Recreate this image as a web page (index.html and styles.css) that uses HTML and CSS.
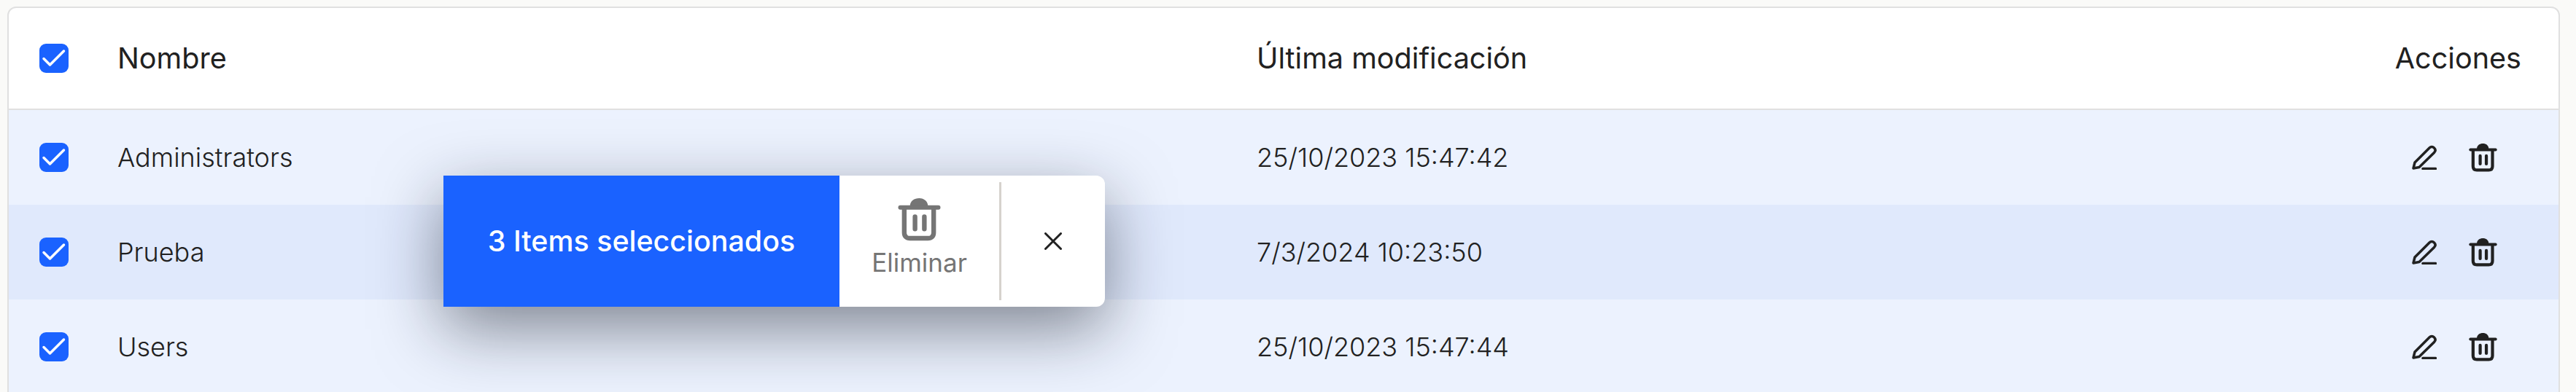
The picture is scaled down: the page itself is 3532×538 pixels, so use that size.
FILE: index.html
```html
<!DOCTYPE html>
<html lang="es">
<head>
    <meta charset="UTF-8">
    <title>Grupos</title>
    <link rel="stylesheet" href="styles.css">
</head>
<body>
    <svg class="icon-defs" width="0" height="0">
        <symbol id="trash" viewBox="0 0 60 60">
            <path d="M17 11C17 4 23 0 30 0C36 0 42 4 42 11Z" fill="currentColor"/>
            <path d="M3.500 13H56.500" fill="none" stroke="currentColor" stroke-width="6" stroke-linecap="round"/>
            <path d="M9 13V48C9 53 12 56 17 56H42C47 56 50 53 50 48V13" fill="none" stroke="currentColor" stroke-width="6.500"/>
            <path d="M24 26V43M37 26V43" fill="none" stroke="currentColor" stroke-width="6.500" stroke-linecap="round"/>
        </symbol>
        <symbol id="pencil" viewBox="0 0 34 34">
            <path d="M2 32L4 24L24 4C26 2 28.500 2 30.500 4C32.500 6 32.500 8.500 30.500 10.500L10 30.500Z" fill="none" stroke="currentColor" stroke-width="3.500" stroke-linejoin="round"/>
            <path d="M15 32.500H32.500" fill="none" stroke="currentColor" stroke-width="3.500" stroke-linecap="round"/>
        </symbol>
        <symbol id="check" viewBox="0 0 40 40">
            <path d="M6 20.500L14.500 29L33.500 10" fill="none" stroke="#fff" stroke-width="3.500" stroke-linecap="round" stroke-linejoin="round"/>
        </symbol>
    </svg>

    <div class="table-card">
        <div class="row head">
            <svg class="checkbox"><use href="#check"/></svg>
            <div>Nombre</div>
            <div>Última modificación</div>
            <div class="actions-title">Acciones</div>
        </div>
        <div class="row selected">
            <svg class="checkbox"><use href="#check"/></svg>
            <div>Administrators</div>
            <div>25/10/2023 15:47:42</div>
            <div class="actions">
                <svg class="icon-edit"><use href="#pencil"/></svg>
                <svg class="icon-delete"><use href="#trash"/></svg>
            </div>
        </div>
        <div class="row selected alt">
            <svg class="checkbox"><use href="#check"/></svg>
            <div>Prueba</div>
            <div>7/3/2024 10:23:50</div>
            <div class="actions">
                <svg class="icon-edit"><use href="#pencil"/></svg>
                <svg class="icon-delete"><use href="#trash"/></svg>
            </div>
        </div>
        <div class="row selected">
            <svg class="checkbox"><use href="#check"/></svg>
            <div>Users</div>
            <div>25/10/2023 15:47:44</div>
            <div class="actions">
                <svg class="icon-edit"><use href="#pencil"/></svg>
                <svg class="icon-delete"><use href="#trash"/></svg>
            </div>
        </div>
    </div>

    <!-- barra flotante de seleccion -->
    <div class="selection-bar">
        <div class="selection-count">3 Items seleccionados</div>
        <div class="selection-delete">
            <svg class="icon-big"><use href="#trash"/></svg>
            <span>Eliminar</span>
        </div>
        <div class="selection-sep"></div>
        <div class="selection-close">
            <svg class="icon-close" viewBox="0 0 24 24">
                <path d="M1.500 1.500L22.500 22.500M22.500 1.500L1.500 22.500" fill="none" stroke="#212121" stroke-width="3" stroke-linecap="round"/>
            </svg>
        </div>
    </div>
</body>
</html>
```

FILE: styles.css
```css
html, body {
    height: 100%;
    overflow: hidden;
}
body {
    margin: 0;
    padding: 9px 22px 0 10px;
    box-sizing: border-box;
    background: #fafaf8;
    font-family: Inter, "Liberation Sans", sans-serif;
    color: #212121;
}
.icon-defs { display: block; height: 0; }
.table-card {
    background: white;
    border: 2px solid #e0e0e0;
    border-radius: 12px 12px 0 0;
    overflow: hidden;
}
.row {
    display: grid;
    grid-template-columns: 107px 1562px 1fr 300px;
    align-items: center;
    height: 130px;
    padding-left: 42px;
    font-size: 36px;
    font-weight: 300;
}
.row.head {
    height: 138px;
    border-bottom: 2px solid #e0e0e0;
    font-size: 39.6px;
    font-weight: 400;
}
.selected { background: #ecf2fe; }
.selected.alt { background: #e0e9fc; }
.checkbox {
    width: 40px;
    height: 40px;
    background: #1a62ff;
    border-radius: 9px;
}
.actions-title {
    text-align: right;
    padding-right: 51px;
}
.actions {
    display: flex;
    justify-content: flex-end;
    align-items: center;
    gap: 44px;
    padding-right: 84px;
}
.icon-edit { width: 34px; height: 34px; }
.icon-delete { width: 39px; height: 39px; }
.selection-bar {
    position: absolute;
    left: 608px;
    top: 241px;
    width: 907px;
    height: 180px;
    display: flex;
    align-items: stretch;
    background: white;
    border-radius: 0 12px 12px 0;
    box-shadow: 0 30px 90px rgba(20,25,40,0.5);
}
.selection-count {
    width: 543px;
    background: #1a62ff;
    color: white;
    font-size: 39.4px;
    font-weight: 500;
    display: flex;
    align-items: center;
    justify-content: center;
}
.selection-delete {
    width: 219px;
    display: flex;
    flex-direction: column;
    align-items: center;
    color: #757575;
    font-size: 35px;
    padding-top: 31px;
    box-sizing: border-box;
}
.icon-big {
    width: 59px;
    height: 59px;
    margin-bottom: 8px;
}
.selection-sep {
    width: 3px;
    margin: 9px 0;
    background: #d6d2cd;
}
.selection-close {
    flex: 1;
    display: flex;
    align-items: center;
    justify-content: center;
}
.icon-close { width: 24px; height: 24px; }
```
